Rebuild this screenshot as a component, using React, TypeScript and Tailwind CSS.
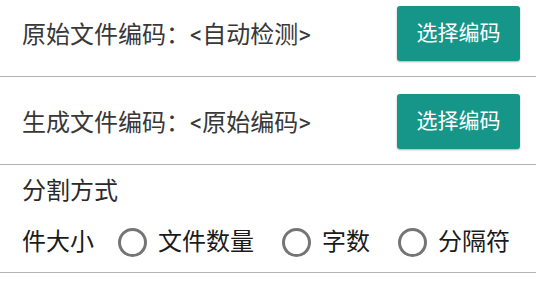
import React from "react";

const FONT = "font-['Roboto','Noto_Sans_CJK_SC',sans-serif]";

function EncodingRow({ label, value, first }: { label: string; value: string; first?: boolean }) {
  return (
    <div
      className={`flex items-center justify-between pl-[22px] pr-[16px] border-b border-[#b3b3b3] ${
        first ? "pt-[6px] pb-[15px]" : "pt-[17px] pb-[15px]"
      }`}
    >
      <span className="text-[24px] leading-none text-[#383838] mt-[2px]">
        {label}：{value}
      </span>
      <button className="h-[55px] w-[123px] rounded-[3px] bg-[#169689] text-white text-[21px] leading-none shadow-[0_1px_2px_rgba(0,0,0,0.3)]">
        选择编码
      </button>
    </div>
  );
}

function Radio({ label }: { label: string }) {
  return (
    <label className="flex items-center">
      <span className="h-[29px] w-[29px] rounded-full border-[3px] border-[#757575]" />
      <span className="ml-[11px] mr-[28px] text-[24px] leading-none text-[#1a1a1a]">{label}</span>
    </label>
  );
}

export default function App() {
  return (
    <div className={`w-[536px] h-[292px] bg-white overflow-hidden ${FONT}`}>
      <EncodingRow label="原始文件编码" value="<自动检测>" first />
      <EncodingRow label="生成文件编码" value="<原始编码>" />
      <div className="border-b border-[#b3b3b3] pb-[12px]">
        <div className="pl-[22px] pt-[14px] text-[24px] leading-none text-[#2a2a2a]">分割方式</div>
        <div className="flex items-center pl-[22px] mt-[21px] h-[36px] whitespace-nowrap">
          <span className="text-[24px] leading-none text-[#1a1a1a] mr-[24px]">件大小</span>
          <Radio label="文件数量" />
          <Radio label="字数" />
          <Radio label="分隔符" />
        </div>
      </div>
    </div>
  );
}
